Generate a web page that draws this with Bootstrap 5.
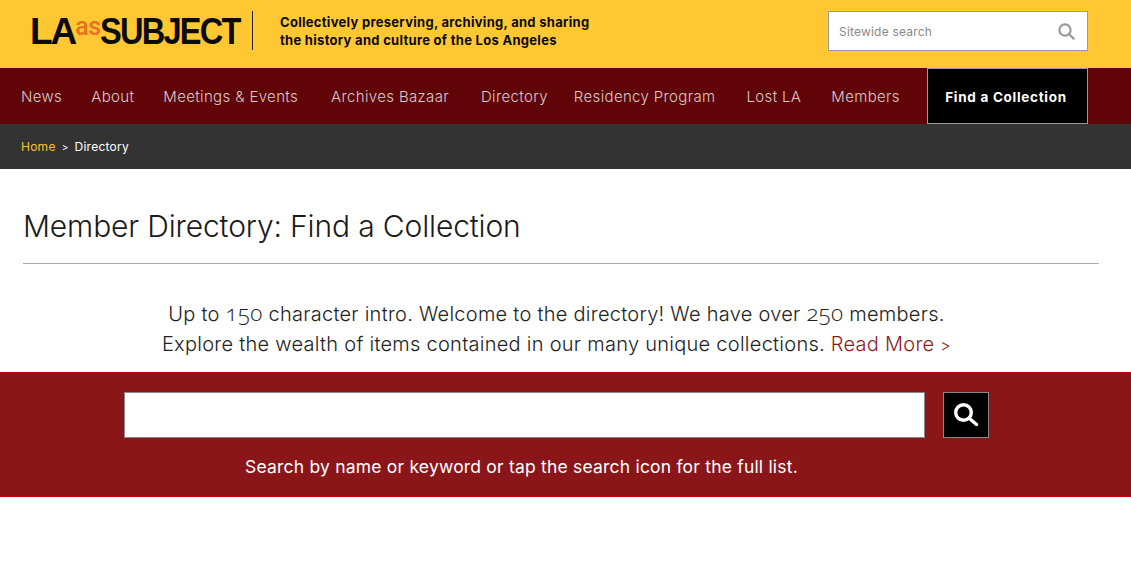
<!DOCTYPE html>
<html lang="en">
<head>
<meta charset="utf-8">
<title>Member Directory</title>
<link href="https://cdn.jsdelivr.net/npm/bootstrap@5.3.0/dist/css/bootstrap.min.css" rel="stylesheet">
<style>
body{font-family:Inter,"Liberation Sans",sans-serif;color:#222;background:#fff}
.top-band{background:#ffc832;height:68px;padding:11px 43px 0 30px}
.brand-logo{width:223px;height:39px;border-right:1px solid #222;font-family:"Liberation Sans",sans-serif;font-weight:700;color:#0b0b0b;font-size:37px;line-height:41px;letter-spacing:-2px;white-space:nowrap;text-decoration:none}
.brand-as{color:#e8701f;font-family:Roboto,sans-serif;font-weight:500;font-size:25px;letter-spacing:-.5px;position:relative;top:-9px;margin:0 -1px 0 0}
.brand-subject{display:inline-block;transform-origin:left center;transform:scaleX(.88)}
.tag-line{margin-left:27px;font:700 13px/18px Inter,sans-serif;letter-spacing:.29px;color:#0b0b0b;padding-top:2px}
.site-search{width:260px;height:40px;background:#fff;border:1px solid #9a9a9a;padding:0 12px 0 10px}
.site-search input{border:0;outline:0;flex:1;min-width:0;font-size:12px;letter-spacing:.2px;padding:2px 0 0}
.site-search input::placeholder{color:#888}
.main-menu{background:#600408;height:56px;padding:2px 43px 0 21px}
.main-menu a.menu-link{color:#dcc9c9;font-size:15px;font-weight:300;letter-spacing:.35px;text-decoration:none;white-space:nowrap}
.menu-cta{margin-left:auto;margin-top:-2px;width:161px;height:56px;padding-top:2px;padding-right:3px;background:#000;border:1px solid #999;color:#fff;font-weight:700;font-size:13.5px;letter-spacing:.7px;text-decoration:none}
.crumb-bar{background:#333;height:45px;padding:1px 21px 0;font-size:12px;letter-spacing:.25px;color:#fff}
.crumb-bar a{color:#f5c42c;text-decoration:none}
.crumb-sep{margin:0 6px;font-size:10px}
.page-head{margin:0 32px 0 23px;padding:37px 0 17px;border-bottom:1px solid #aaa}
.page-head h1{font-size:30px;font-weight:300;line-height:40px;margin:0;letter-spacing:-.14px;color:#1a1a1a}
.intro-text{margin:35px 0 13px;padding-right:18px;text-align:center;font-size:20px;line-height:30px;font-weight:300;letter-spacing:.27px;color:#222}
.intro-text a{color:#8c1c1e;text-decoration:none}
.old-num{font-family:"Open Sans",sans-serif;font-size:22.5px;line-height:1;font-weight:300;font-feature-settings:"onum";font-variant-numeric:oldstyle-nums}
.more-mark{font-size:16px;line-height:1}
.dir-search{background:#8b161a;border-top:1px solid #c00;border-bottom:1px solid #c00;height:125px;padding:19px 18px 0 0;color:#fff}
.dir-field{width:801px;height:46px;border:1px solid #888;background:#fff;border-radius:0;outline:0}
.dir-btn{width:46px;height:46px;background:#000;border:1px solid #888;border-radius:0;margin-left:18px;padding:0}
.dir-hint{font-size:17.5px;letter-spacing:.2px;margin:17px 70px 0 0;text-align:center;line-height:24px}
</style>
</head>
<body>
<header class="top-band d-flex justify-content-between align-items-start">
  <div class="d-flex">
    <a class="brand-logo d-block" href="#">LA<span class="brand-as">as</span><span class="brand-subject">SUBJECT</span></a>
    <div class="tag-line">Collectively preserving, archiving, and sharing<br>the history and culture of the Los Angeles</div>
  </div>
  <form class="site-search d-flex align-items-center">
    <input type="text" placeholder="Sitewide search" aria-label="Sitewide search">
    <svg width="17" height="17" viewBox="0 0 17 17" fill="none" stroke="#999" stroke-width="2.2" stroke-linecap="round"><circle cx="7" cy="7" r="5.6"/><path d="M11.2 11.2l4.4 4.4"/></svg>
  </form>
</header>
<nav class="main-menu d-flex align-items-center">
  <a class="menu-link" href="#">News</a>
  <a class="menu-link" style="margin-left:29px" href="#">About</a>
  <a class="menu-link" style="margin-left:29px" href="#">Meetings &amp; Events</a>
  <a class="menu-link" style="margin-left:33px" href="#">Archives Bazaar</a>
  <a class="menu-link" style="margin-left:32px" href="#">Directory</a>
  <a class="menu-link" style="margin-left:26px" href="#">Residency Program</a>
  <a class="menu-link" style="margin-left:31px" href="#">Lost LA</a>
  <a class="menu-link" style="margin-left:30px" href="#">Members</a>
  <a class="menu-cta d-flex align-items-center justify-content-center" href="#">Find a Collection</a>
</nav>
<div class="crumb-bar d-flex align-items-center">
  <a href="#">Home</a><span class="crumb-sep">&gt;</span><span>Directory</span>
</div>
<main>
  <div class="page-head"><h1>Member Directory: Find a Collection</h1></div>
  <p class="intro-text">Up to <span class="old-num">150</span> character intro. Welcome to the directory! We have over <span class="old-num">250</span> members.<br>Explore the wealth of items contained in our many unique collections. <a href="#">Read More <span class="more-mark">&gt;</span></a></p>
  <section class="dir-search">
    <form class="d-flex justify-content-center">
      <input class="dir-field" type="text" aria-label="Search the directory">
      <button class="dir-btn d-flex align-items-center justify-content-center" type="button" aria-label="Search">
        <svg width="26" height="26" viewBox="0 0 26 26" fill="none" stroke="#fff" stroke-width="3.4" stroke-linecap="round"><circle cx="10.5" cy="10.5" r="7.8"/><path d="M16.5 16.5l7 6"/></svg>
      </button>
    </form>
    <p class="dir-hint">Search by name or keyword or tap the search icon for the full list.</p>
  </section>
</main>
</body>
</html>
